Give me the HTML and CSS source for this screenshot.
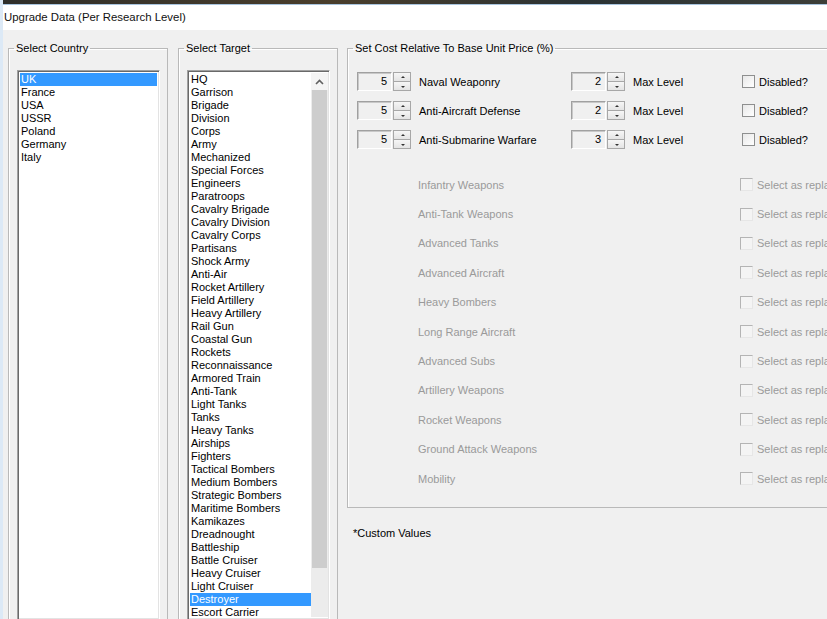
FILE: index.html
```html
<!DOCTYPE html>
<html lang="en">
<head>
    <meta charset="UTF-8">
    <title>Upgrade Data (Per Research Level)</title>
    <link rel="stylesheet" href="styles.css">
</head>
<body>
    <div class="frame-top"></div>
    <div class="titlebar">Upgrade Data (Per Research Level)</div>

    <div class="dialog">
        <fieldset class="group group-list">
            <legend>Select Country</legend>
            <div class="listbox">
                <div class="item selected">UK</div>
                <div class="item">France</div>
                <div class="item">USA</div>
                <div class="item">USSR</div>
                <div class="item">Poland</div>
                <div class="item">Germany</div>
                <div class="item">Italy</div>
            </div>
        </fieldset>

        <fieldset class="group group-list">
            <legend>Select Target</legend>
            <div class="listbox with-scroll">
                <div class="items">
                    <div class="item">HQ</div>
                    <div class="item">Garrison</div>
                    <div class="item">Brigade</div>
                    <div class="item">Division</div>
                    <div class="item">Corps</div>
                    <div class="item">Army</div>
                    <div class="item">Mechanized</div>
                    <div class="item">Special Forces</div>
                    <div class="item">Engineers</div>
                    <div class="item">Paratroops</div>
                    <div class="item">Cavalry Brigade</div>
                    <div class="item">Cavalry Division</div>
                    <div class="item">Cavalry Corps</div>
                    <div class="item">Partisans</div>
                    <div class="item">Shock Army</div>
                    <div class="item">Anti-Air</div>
                    <div class="item">Rocket Artillery</div>
                    <div class="item">Field Artillery</div>
                    <div class="item">Heavy Artillery</div>
                    <div class="item">Rail Gun</div>
                    <div class="item">Coastal Gun</div>
                    <div class="item">Rockets</div>
                    <div class="item">Reconnaissance</div>
                    <div class="item">Armored Train</div>
                    <div class="item">Anti-Tank</div>
                    <div class="item">Light Tanks</div>
                    <div class="item">Tanks</div>
                    <div class="item">Heavy Tanks</div>
                    <div class="item">Airships</div>
                    <div class="item">Fighters</div>
                    <div class="item">Tactical Bombers</div>
                    <div class="item">Medium Bombers</div>
                    <div class="item">Strategic Bombers</div>
                    <div class="item">Maritime Bombers</div>
                    <div class="item">Kamikazes</div>
                    <div class="item">Dreadnought</div>
                    <div class="item">Battleship</div>
                    <div class="item">Battle Cruiser</div>
                    <div class="item">Heavy Cruiser</div>
                    <div class="item">Light Cruiser</div>
                    <div class="item selected">Destroyer</div>
                    <div class="item">Escort Carrier</div>
                </div>
                <div class="scrollbar">
                    <div class="scroll-up">
                        <svg width="9" height="6" viewBox="0 0 9 6"><polyline points="1,5 4.5,1.5 8,5" fill="none" stroke="#606060" stroke-width="1.6"/></svg>
                    </div>
                    <div class="scroll-thumb"></div>
                </div>
            </div>
        </fieldset>

        <div class="cost-col">
            <fieldset class="group group-cost">
                <legend>Set Cost Relative To Base Unit Price (%)</legend>

                <div class="row">
                    <div class="spin"><span class="spin-box">5</span><span class="spin-btns"><span class="up"></span><span class="down"></span></span></div>
                    <span class="lbl lbl-name">Naval Weaponry</span>
                    <div class="spin"><span class="spin-box">2</span><span class="spin-btns"><span class="up"></span><span class="down"></span></span></div>
                    <span class="lbl lbl-max">Max Level</span>
                    <span class="chk"></span><span class="lbl">Disabled?</span>
                </div>
                <div class="row">
                    <div class="spin"><span class="spin-box">5</span><span class="spin-btns"><span class="up"></span><span class="down"></span></span></div>
                    <span class="lbl lbl-name">Anti-Aircraft Defense</span>
                    <div class="spin"><span class="spin-box">2</span><span class="spin-btns"><span class="up"></span><span class="down"></span></span></div>
                    <span class="lbl lbl-max">Max Level</span>
                    <span class="chk"></span><span class="lbl">Disabled?</span>
                </div>
                <div class="row">
                    <div class="spin"><span class="spin-box">5</span><span class="spin-btns"><span class="up"></span><span class="down"></span></span></div>
                    <span class="lbl lbl-name">Anti-Submarine Warfare</span>
                    <div class="spin"><span class="spin-box">3</span><span class="spin-btns"><span class="up"></span><span class="down"></span></span></div>
                    <span class="lbl lbl-max">Max Level</span>
                    <span class="chk"></span><span class="lbl">Disabled?</span>
                </div>

                <div class="repl">
                    <div class="repl-row"><span class="repl-name">Infantry Weapons</span><span class="chk off"></span><span class="repl-text">Select as replacement</span></div>
                    <div class="repl-row"><span class="repl-name">Anti-Tank Weapons</span><span class="chk off"></span><span class="repl-text">Select as replacement</span></div>
                    <div class="repl-row"><span class="repl-name">Advanced Tanks</span><span class="chk off"></span><span class="repl-text">Select as replacement</span></div>
                    <div class="repl-row"><span class="repl-name">Advanced Aircraft</span><span class="chk off"></span><span class="repl-text">Select as replacement</span></div>
                    <div class="repl-row"><span class="repl-name">Heavy Bombers</span><span class="chk off"></span><span class="repl-text">Select as replacement</span></div>
                    <div class="repl-row"><span class="repl-name">Long Range Aircraft</span><span class="chk off"></span><span class="repl-text">Select as replacement</span></div>
                    <div class="repl-row"><span class="repl-name">Advanced Subs</span><span class="chk off"></span><span class="repl-text">Select as replacement</span></div>
                    <div class="repl-row"><span class="repl-name">Artillery Weapons</span><span class="chk off"></span><span class="repl-text">Select as replacement</span></div>
                    <div class="repl-row"><span class="repl-name">Rocket Weapons</span><span class="chk off"></span><span class="repl-text">Select as replacement</span></div>
                    <div class="repl-row"><span class="repl-name">Ground Attack Weapons</span><span class="chk off"></span><span class="repl-text">Select as replacement</span></div>
                    <div class="repl-row"><span class="repl-name">Mobility</span><span class="chk off"></span><span class="repl-text">Select as replacement</span></div>
                </div>
            </fieldset>
            <p class="note">*Custom Values</p>
        </div>
    </div>
</body>
</html>
```

FILE: styles.css
```css
html, body {
    margin: 0;
    padding: 0;
    overflow: hidden;
}
body {
    width: 827px;
    height: 619px;
    background: #f0f0f0;
    font-family: "Liberation Sans", Arial, sans-serif;
    font-size: 11px;
    color: #000;
    border-left: 3px solid #dce9f6;
    box-sizing: border-box;
}
.frame-top {
    height: 4px;
    background: linear-gradient(90deg, #2e2e2a, #4a3e2c 40%, #2a3234 70%, #3c3e38);
    border-bottom: 1px solid #a8c4de;
    margin-left: -3px;
}
.titlebar {
    height: 25px;
    line-height: 25px;
    background: #fff;
    margin-left: -3px;
    padding-left: 4px;
    font-size: 11.4px;
    color: #111;
}
.dialog {
    display: flex;
    align-items: flex-start;
    padding: 12px 0 0 5px;
}

/* group boxes */
.group {
    margin: 0;
    border: 1px solid #b9b9b9;
    box-shadow: inset 1px 1px 0 #fff;
    min-width: 0;
    box-sizing: border-box;
    flex: none;
}
.group legend {
    padding: 0 2px;
    margin-left: -3px;
    line-height: 13px;
}
.group-list {
    width: 160px;
    height: 578px;
    padding: 15px 7px 0 8px;
    margin-right: 10px;
}
.group-list + .group-list {
    margin-right: 9px;
}

/* list boxes */
.listbox {
    width: 143px;
    height: 550px;
    overflow: hidden;
    background: #fff;
    border: 1px solid;
    border-color: #a0a0a0 #fff #fff #a0a0a0;
    box-shadow: inset 1px 1px 0 #696969, inset -1px -1px 0 #e3e3e3;
    padding: 2px;
    box-sizing: border-box;
}
.item {
    height: 13px;
    line-height: 13px;
    padding-left: 1px;
    white-space: nowrap;
}
.item.selected {
    background: #3399ff;
    color: #fff;
}
.with-scroll {
    display: flex;
    padding-right: 0;
}
.items {
    flex: 1;
    min-width: 0;
}
.scrollbar {
    width: 17px;
    background: #ececec;
    display: flex;
    flex-direction: column;
    margin-right: 1px;
}
.scroll-up {
    height: 17px;
    background: #f4f4f4;
    display: flex;
    align-items: center;
    justify-content: center;
}
.scroll-thumb {
    height: 478px;
    margin: 0 1px;
    background: #cdcdcd;
}

/* cost group */
.cost-col {
    width: 520px;
    flex: none;
}
.group-cost {
    width: 520px;
    height: 466px;
    padding: 17px 0 0 9px;
}
.group-cost legend {
    margin-left: -4px;
}
.row {
    display: flex;
    align-items: center;
    height: 19px;
    margin-bottom: 10px;
    white-space: nowrap;
}
.spin {
    display: flex;
    height: 19px;
    flex: none;
}
.spin-box {
    width: 35px;
    height: 19px;
    box-sizing: border-box;
    border: 1px solid;
    border-color: #a0a0a0 #fff #fff #a0a0a0;
    box-shadow: inset 1px 1px 0 #c8c8c8;
    text-align: right;
    padding-right: 4px;
    line-height: 17px;
}
.spin-btns {
    width: 18px;
    margin-left: 1px;
    display: flex;
    flex-direction: column;
}
.spin-btns span {
    flex: 1;
    position: relative;
    background: linear-gradient(#f6f6f6, #e4e4e4);
    border: 1px solid #a7a7a7;
}
.spin-btns .down {
    border-top: none;
}
.spin-btns span::after {
    content: "";
    position: absolute;
    left: 7px;
    top: 3px;
    border-left: 2px solid transparent;
    border-right: 2px solid transparent;
}
.spin-btns .up::after {
    border-bottom: 2px solid #333;
}
.spin-btns .down::after {
    top: 4px;
    border-top: 2px solid #333;
}
.lbl-name {
    width: 152px;
    margin-left: 8px;
    flex: none;
}
.lbl-max {
    width: 109px;
    margin-left: 8px;
    flex: none;
}
.chk {
    width: 13px;
    height: 13px;
    box-sizing: border-box;
    border: 1px solid #8e8f8f;
    background: linear-gradient(135deg, #e8e8e8, #fff);
    margin-right: 4px;
    flex: none;
}
.chk.off {
    border-color: #b4b4b4 #e6e6e6 #e6e6e6 #b4b4b4;
    background: #f4f4f4;
}

/* replacement rows */
.repl {
    margin-top: 21px;
}
.repl-row {
    display: flex;
    align-items: center;
    height: 29.4px;
    white-space: nowrap;
    color: #9a9a9a;
}
.repl-name {
    width: 322px;
    padding-left: 61px;
    flex: none;
}

.note {
    margin: 19px 0 0 6px;
    line-height: 13px;
}
```
